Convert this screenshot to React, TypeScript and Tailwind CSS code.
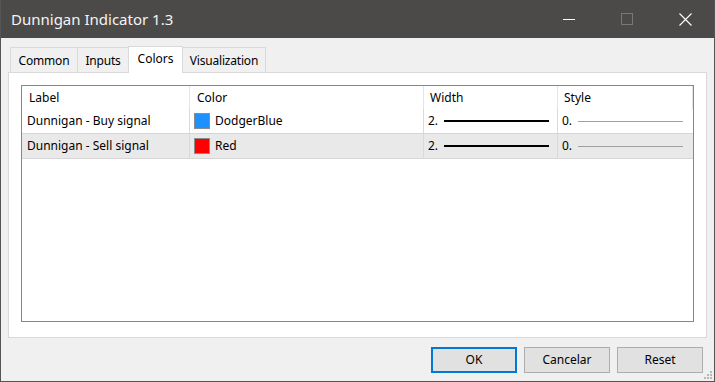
const font = { fontFamily: '"Noto Sans", "Open Sans", sans-serif' };

const rows = [
    { label: "Dunnigan - Buy signal", color: "DodgerBlue", swatch: "bg-[#1e90ff]", selected: false },
    { label: "Dunnigan - Sell signal", color: "Red", swatch: "bg-[#ff0000]", selected: true },
];

const tabs = [
    { name: "Common", w: "w-[68px]" },
    { name: "Inputs", w: "w-[52px]" },
    { name: "Colors", w: "w-[55px]" },
    { name: "Visualization", w: "w-[84px]" },
];

function TitleButtons() {
    return (
        <div className="flex h-full items-center">
            <div className="flex h-full w-[58px] items-center justify-center">
                <div className="h-px w-[12px] bg-white" />
            </div>
            <div className="flex h-full w-[58px] items-center justify-center">
                <div className="h-[12px] w-[12px] border border-[#7a7876]" />
            </div>
            <div className="flex h-full w-[58px] items-center justify-center">
                <svg width="13" height="13" viewBox="0 0 13 13">
                    <path d="M0.5 0.5 L12.5 12.5 M12.5 0.5 L0.5 12.5" stroke="#ffffff" strokeWidth="1.1" />
                </svg>
            </div>
        </div>
    );
}

export default function App() {
    return (
        <div
            className="flex h-[382px] w-[715px] flex-col border-x border-b border-[#555555] bg-[#f0f0f0] text-[12px] text-black"
            style={font}
        >
            <div className="flex h-[38px] shrink-0 items-center justify-between bg-[#4c4a48] pl-[10px] text-[15px] text-[#f4f4f4]">
                <span>Dunnigan Indicator 1.3</span>
                <TitleButtons />
            </div>

            <div className="flex items-end pl-[9px] pt-[8px]">
                {tabs.map((t) =>
                    t.name === "Colors" ? (
                        <div
                            key={t.name}
                            className={`relative z-10 -mb-px -mr-px flex h-[27px] items-start justify-center border-x border-t border-[#d9d9d9] bg-white pt-[3px] ${t.w}`}
                        >
                            {t.name}
                        </div>
                    ) : (
                        <div
                            key={t.name}
                            className={`-mr-px flex h-[25px] items-center justify-center border border-b-0 border-[#d9d9d9] bg-[#f0f0f0] pt-[2px] tracking-[-0.2px] ${t.w}`}
                        >
                            {t.name}
                        </div>
                    )
                )}
            </div>

            <div className="mx-[7px] h-[266px] border border-[#d9d9d9] bg-white px-[12px] pt-[12px]">
                <div className="h-[237px] w-[673px] border border-[#828790] bg-white">
                    <div className="grid h-[23px] grid-cols-[168px_234px_134px_135px] items-center">
                        <div className="border-r border-[#e5e5e5] pl-[7px] leading-[23px]">Label</div>
                        <div className="border-r border-[#e5e5e5] pl-[7px] leading-[23px]">Color</div>
                        <div className="border-r border-[#e5e5e5] pl-[6px] leading-[23px]">Width</div>
                        <div className="border-r border-[#e5e5e5] pl-[6px] leading-[23px]">Style</div>
                    </div>
                    {rows.map((r) => (
                        <div
                            key={r.label}
                            className={`grid h-[25px] grid-cols-[168px_234px_134px_135px] border-b border-[#d6d6d6] ${
                                r.selected ? "bg-[#e9e9e9]" : "bg-white"
                            }`}
                        >
                            <div className="flex items-center border-r border-[#d9d9d9] pl-[5px]">{r.label}</div>
                            <div className="flex items-center gap-[5px] border-r border-[#d9d9d9] pl-[4px]">
                                <div className={`h-[16px] w-[16px] border border-[#8c8c8c] ${r.swatch}`} />
                                <span>{r.color}</span>
                            </div>
                            <div className="flex items-center border-r border-[#d9d9d9] pl-[4px]">
                                <span className="w-[16px]">2.</span>
                                <div className="h-[2px] w-[105px] bg-black" />
                            </div>
                            <div className="flex items-center pl-[4px]">
                                <span className="w-[16px]">0.</span>
                                <div className="h-px w-[105px] bg-[#a0a0a0]" />
                            </div>
                        </div>
                    ))}
                </div>
            </div>

            <div className="relative flex flex-1 items-start justify-end gap-[7px] pr-[11px] pt-[9px]">
                <button className="h-[26px] w-[86px] border-2 border-[#0078d7] bg-[#e1e1e1]">OK</button>
                <button className="h-[26px] w-[86px] border border-[#adadad] bg-[#e1e1e1]">Cancelar</button>
                <button className="h-[26px] w-[86px] border border-[#adadad] bg-[#e1e1e1]">Reset</button>
                <svg className="absolute bottom-[1px] right-[1px]" width="10" height="10" viewBox="0 0 10 10">
                    <rect x="7" y="1" width="2" height="2" fill="#b8b8b8" />
                    <rect x="4" y="4" width="2" height="2" fill="#b8b8b8" />
                    <rect x="7" y="4" width="2" height="2" fill="#b8b8b8" />
                    <rect x="1" y="7" width="2" height="2" fill="#b8b8b8" />
                    <rect x="4" y="7" width="2" height="2" fill="#b8b8b8" />
                    <rect x="7" y="7" width="2" height="2" fill="#b8b8b8" />
                </svg>
            </div>
        </div>
    );
}
